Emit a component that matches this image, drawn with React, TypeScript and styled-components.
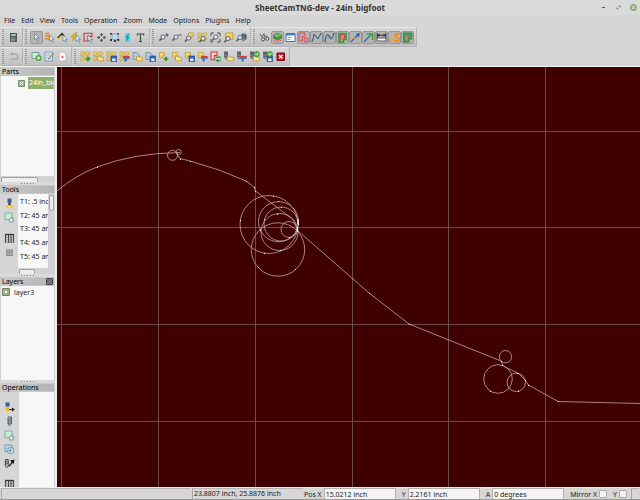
import React from "react";
import styled, { createGlobalStyle } from "styled-components";

const GlobalStyle = createGlobalStyle`
  * { box-sizing: border-box; }
  html, body { margin: 0; height: 100%; }
  #root { height: 100%; }
  body, button, input {
    font-family: "Noto Sans", "Open Sans", sans-serif;
    font-size: 7px;
    color: #222;
  }
`;

/* ---------- layout ---------- */

const Window = styled.div`
  display: flex;
  flex-direction: column;
  height: 100vh;
  overflow: hidden;
  background: #d6d6d6;
`;

const TitleBar = styled.header`
  display: grid;
  grid-template-columns: 1fr auto 1fr;
  align-items: center;
  flex: none;
  height: 15px;
  background: #dadada;
`;

const Title = styled.h1`
  grid-column: 2;
  margin: 0;
  font-size: 8px;
  line-height: 15px;
  font-weight: 700;
  color: #333;
`;

const WindowButtons = styled.div`
  display: flex;
  justify-content: flex-end;
  gap: 8px;
  padding-right: 3px;
`;

const WindowButton = styled.button`
  width: 7px;
  height: 7px;
  padding: 0;
  border: 0;
  background: none;
  display: flex;
`;

const MenuBar = styled.nav`
  display: flex;
  flex: none;
  gap: 6px;
  height: 12px;
  padding-left: 4px;
`;

const MenuItem = styled.button`
  padding: 0;
  border: 0;
  background: none;
  line-height: 12px;
`;

const ToolbarRow = styled.div<{ $height: number }>`
  display: flex;
  flex: none;
  height: ${(p) => p.$height}px;
`;

const ToolGroup = styled.div`
  display: flex;
  align-items: center;
  height: 100%;
  padding: 0 2px 0 6px;
  border: 1px solid;
  border-color: #e6e6e6 #b4b4b4 #b4b4b4 #d4d4d4;
  background:
    repeating-linear-gradient(#999 0 1px, transparent 1px 2px) 1px 1px / 2px 15px no-repeat,
    linear-gradient(#d8d8d8, #c1c1c1);
`;

const ToolButton = styled.button<{ $on?: boolean }>`
  display: flex;
  align-items: center;
  justify-content: center;
  width: 13px;
  height: 13px;
  padding: 0;
  border: 1px solid ${(p) => (p.$on ? "#979797" : "transparent")};
  border-radius: 2px;
  background: ${(p) => (p.$on ? "#b4b4b4" : "none")};
`;

const Main = styled.div`
  display: flex;
  flex: 1;
  min-height: 0;
  border-top: 1px solid #f2f2f2;
`;

const Sidebar = styled.aside`
  display: flex;
  flex-direction: column;
  flex: none;
  width: 57px;
  border-right: 2px solid #eee;
  background: #d0d0d0;
`;

const Panel = styled.section<{ $height?: number }>`
  display: flex;
  flex-direction: column;
  min-height: 0;
  flex: ${(p) => (p.$height ? `0 0 ${p.$height}px` : "1")};
`;

const PanelHeader = styled.h2`
  display: flex;
  flex: none;
  align-items: center;
  justify-content: space-between;
  height: 9px;
  margin: 0;
  padding: 0 1px;
  border: 1px solid #c8c8c8;
  background: linear-gradient(90deg, #c9c9c9, #b4b4b4);
  font-size: 7px;
  line-height: 7px;
  font-weight: 400;
  color: #000;
`;

const Splitter = styled.div`
  flex: none;
  height: 3px;
  background: radial-gradient(circle, #858585 0 0.5px, transparent 1px) center / 3px 3px
    repeat-x #dadada;
  border: 0 solid #dadada;
  border-width: 0 21px;
`;

const PanelBody = styled.div`
  display: flex;
  flex: 1;
  min-height: 0;
`;

const List = styled.ul`
  flex: 1;
  min-width: 0;
  min-height: 0;
  margin: 0 1px;
  padding: 0;
  overflow: hidden;
  list-style: none;
  background: #f7f7f7;
`;

const ToolList = styled(List)`
  display: flex;
  flex-direction: column;
  margin: 0;
  padding: 1px 0 5px;
`;

const ToolRow = styled.li`
  display: flex;
  flex: 1;
  align-items: center;
  padding-left: 2px;
  white-space: nowrap;
  overflow: hidden;
`;

const PartRow = styled.li`
  display: flex;
  align-items: center;
  gap: 3px;
  padding: 1px 0 0 17px;
  white-space: nowrap;
`;

const PartName = styled.span`
  flex: none;
  width: 60px;
  padding: 0 1px;
  line-height: 12px;
  background: #8fae6c;
  color: #fff;
`;

const LayerRow = styled.li`
  display: flex;
  align-items: center;
  height: 12px;
  padding-left: 1px;
`;

const LayerLabel = styled.label`
  display: flex;
  align-items: center;
  gap: 4px;
`;

const LayerBox = styled.input`
  appearance: none;
  width: 8px;
  height: 8px;
  margin: 0;
  border: 3px solid #9db287;
  border-radius: 1px;
  outline: 1px solid #6f8060;
  outline-offset: -1px;
  background: #fff;
`;

const HScroll = styled.div<{ $thumb: number }>`
  flex: none;
  height: 6px;
  padding: 1px;
  background: #d2d2d2;
  &::before {
    content: "";
    display: block;
    width: ${(p) => p.$thumb}px;
    height: 5px;
    border: 1px solid #a0a0a0;
    border-radius: 1px;
    background: #ededed;
  }
`;

const VScroll = styled.div`
  flex: none;
  width: 7px;
  padding: 1px;
  background: #d2d2d2;
  &::before {
    content: "";
    display: block;
    height: 14px;
    border: 1px solid #a0a0a0;
    border-radius: 2px;
    background: #ededed;
  }
`;

const ListColumn = styled.div`
  display: flex;
  flex: 1;
  flex-direction: column;
  min-width: 0;
`;

const IconColumn = styled.div<{ $top: number }>`
  display: flex;
  flex: none;
  flex-direction: column;
  align-items: center;
  gap: 1px;
  width: 18px;
  padding-top: ${(p) => p.$top}px;
  overflow: hidden;
  background: #d6d6d6;
`;

const Gap = styled.div`
  flex: none;
  height: 6px;
`;

const SideButton = styled(ToolButton)`
  flex: none;
`;

const Canvas = styled.main`
  flex: 1;
  min-width: 0;
  overflow: hidden;
  background: #3e0000;
`;

const Plot = styled.svg`
  display: block;
  width: 100%;
  height: 100%;
`;

const StatusBar = styled.footer`
  display: flex;
  flex: none;
  align-items: flex-end;
  height: 13px;
  border-top: 1px solid #eee;
  border-bottom: 1px solid #999;
  background: #d6d6d6;
`;

const StatusCell = styled.div<{ $width?: number }>`
  flex: ${(p) => (p.$width ? `0 0 ${p.$width}px` : "1")};
  align-self: stretch;
  margin: 0 1px;
  padding-left: 1px;
  border-left: 1px solid #a5a5a5;
  border-top: 1px solid #b5b5b5;
  line-height: 9px;
  white-space: nowrap;
`;

const StatusFields = styled.div`
  display: flex;
  flex: none;
  align-items: flex-end;
  gap: 6px;
  padding-right: 3px;
`;

const Field = styled.label`
  display: flex;
  align-items: flex-end;
  gap: 2px;
  height: 11px;
  line-height: 9px;
  white-space: nowrap;
`;

const FieldInput = styled.input`
  width: 72px;
  height: 11px;
  padding: 1px 1px 0;
  border: 1px solid #b0b0b0;
  border-bottom: 0;
  border-radius: 1px 1px 0 0;
  background: #f4f4f4;
  line-height: 9px;
`;

const Check = styled.input`
  appearance: none;
  width: 8px;
  height: 8px;
  margin: 0 0 1px;
  border: 1px solid #aaa;
  border-radius: 1px;
  background: #f4f4f4;
`;

/* ---------- icons ---------- */

const Glyph = styled.svg`
  display: block;
  flex: none;
`;

const Icon = ({ children }: { children: React.ReactNode }) => (
  <Glyph width="11" height="11" viewBox="0 0 11 11" aria-hidden="true">
    {children}
  </Glyph>
);

const Cursor = ({ x = 5, y = 3 }: { x?: number; y?: number }) => (
  <path
    transform={`translate(${x} ${y})`}
    d="M0 0v6l1.5-1.2L2.6 7.4l1.2-.6-1.1-2.4h1.8z"
    fill="#eef4fa"
    stroke="#5b7690"
    strokeWidth=".7"
  />
);

const Lens = ({ x = 4, y = 4 }: { x?: number; y?: number }) => (
  <g transform={`translate(${x} ${y})`} fill="#dbe6ee" stroke="#53606c">
    <path d="M-1.4 1.4L-3.6 3.6" strokeWidth="1.5" />
    <circle r="2.1" strokeWidth=".9" />
  </g>
);

const Part = ({ x = 1, y = 1 }: { x?: number; y?: number }) => (
  <path
    transform={`translate(${x} ${y})`}
    d="M.4 .4h5v3.4h-2v2h-3z"
    fill="#f4d668"
    stroke="#b8922c"
    strokeWidth=".7"
  />
);

const Parts = () => (
  <g fill="#f4d668" stroke="#b8922c" strokeWidth=".6">
    <path d="M1 1h3.4v2.4H3V4.8H1zM6 1h3.6v2.4H8V4.8H6zM1 6h3.4v2H3V9.6H1zM6 6h3.6v2H8V9.6H6z" />
  </g>
);

const Drill = ({ x = 0, y = 0 }: { x?: number; y?: number }) => (
  <g transform={`translate(${x} ${y})`}>
    <path d="M1 .5h4v3.2H1z" fill="#5b6670" />
    <path d="M1.7 3.7h2.6v3L3 8.2 1.7 6.8z" fill="#96a2ac" stroke="#3d464e" strokeWidth=".6" />
    <path d="M1.7 5.8l2.6-1" stroke="#333" strokeWidth=".7" />
  </g>
);

const Plus = ({ x = 8, y = 8 }: { x?: number; y?: number }) => (
  <path d={`M${x - 2.3} ${y}h4.6M${x} ${y - 2.3}v4.6`} stroke="#269a22" strokeWidth="1.7" />
);

const Folder = () => (
  <path d="M4.5 5.3h2l.8 1h3.2v3.5h-6z" fill="#fae68c" stroke="#bd8d20" strokeWidth=".7" />
);

const Disk = () => (
  <g>
    <path d="M5 5h5.5v5.6H5z" fill="#2f66b8" stroke="#174386" strokeWidth=".6" />
    <path d="M6.2 7.5h3.2v2.6H6.2z" fill="#eef4ff" />
  </g>
);

const SwapMark = () => (
  <g>
    <path d="M4 5.5h6.7" stroke="#d63b2a" strokeWidth="1.2" />
    <path d="M4 7h6.7" stroke="#2566be" strokeWidth="1.6" />
    <path d="M5.6 7.8h2v2.6h-2z" fill="#2566be" />
  </g>
);

const Sheet = () => (
  <path d="M1 1.5h4l2 2v5H1z" fill="#b3cbe0" stroke="#6d8aa4" strokeWidth=".8" />
);

const Tick = () => (
  <g>
    <circle cx="7.8" cy="3.1" r="2.7" fill="#56b848" stroke="#257723" strokeWidth=".5" />
    <path d="M6.5 3l1 1.1 1.7-2" fill="none" stroke="#fff" strokeWidth=".9" />
  </g>
);

const RedOutline = () => (
  <path d="M1 1h6v3.5H4.3V8.8H1z" fill="#f2d4d4" stroke="#d23540" strokeWidth="1.1" />
);

const icons: Record<string, React.ReactNode> = {
  machine: (
    <>
      <path d="M2 1h7v9H2z" fill="#49535b" />
      <path d="M3 2h5v2H3z" fill="#9fc3a4" />
      <path d="M3 5.8h3.7M3 7.3h3.7M3 8.8h3.7" stroke="#b3bdc6" strokeWidth=".8" />
      <path d="M7.2 5.2h1v4h-1z" fill="#bd5551" />
    </>
  ),
  select: <Cursor x={3.5} y={1.5} />,
  contour: (
    <>
      <path d="M5.4 1.5H2.2v2.8h3V7H1" fill="none" stroke="#e98b21" strokeWidth="1.5" />
      <Cursor x={5.5} />
    </>
  ),
  start: (
    <>
      <path d="M.8 6L5 1.8l2 2" fill="none" stroke="#333" strokeWidth="1.7" />
      <path d="M1.5 7l3.2-3.2" stroke="#e5cb27" strokeWidth="1.5" />
      <Cursor x={6} y={3} />
    </>
  ),
  selectPart: (
    <>
      <path d="M5 .7L1 5h3L2.5 8.7 7.5 4H4.7L7 .7z" fill="#f1c634" stroke="#9b7715" strokeWidth=".5" />
      <Cursor x={6} y={3} />
    </>
  ),
  nest: (
    <>
      <path d="M1 1.2h8v3.2H5V9H1z" fill="none" stroke="#d23540" strokeWidth="1.1" />
      <Cursor x={5} y={3} />
    </>
  ),
  move: (
    <>
      <path d="M5.5 1.5v8M1.5 5.5h8" stroke="#555" strokeWidth="1" />
      <path d="M5.5 1L7.2 3.3H3.8zM5.5 10L7.2 7.7H3.8zM1 5.5l2.3-1.7v3.4zM10 5.5L7.7 3.8v3.4z" fill="#444" />
      <path d="M4.5 4.5h2v2h-2z" fill="#eee" />
    </>
  ),
  resize: (
    <>
      <path d="M3 2h6v5.5H3z" fill="#c4d8ea" stroke="#7b8fa2" strokeWidth=".7" />
      <path d="M1 1h2v1.6H1zM8.5 1h1.5v1.6H8.500zM1 7h2v2H1zM5 8h2v2H5zM8.3 7h2v2h-2z" fill="#273440" />
    </>
  ),
  measure: (
    <>
      <path d="M3 1h5v9H3z" fill="#32e3ee" />
      <path d="M6.5 2.500L4.500 5.2h2L4.4 8.500" fill="none" stroke="#256080" strokeWidth=".9" />
    </>
  ),
  text: <path d="M2 2h7M5.500 2v7.500M4 9.500h3M2.300 1.500v2M8.700 1.500v2" stroke="#444" strokeWidth="1.1" />,
  zoomIn: (
    <>
      <Lens x={5} y={5} />
      <path d="M7.4 3h3.2M9 1.4v3.2" stroke="#444" strokeWidth=".9" />
    </>
  ),
  zoomOut: (
    <>
      <Lens x={5} y={5} />
      <path d="M7.4 3h3.2" stroke="#444" strokeWidth=".9" />
    </>
  ),
  zoomPart: (
    <>
      <Part x={4} y={0.5} />
      <Lens x={4.5} y={6} />
    </>
  ),
  zoomParts: (
    <>
      <Parts />
      <Lens x={6} y={6.5} />
    </>
  ),
  zoomBox: (
    <>
      <path d="M1 4V1h3M7 1h3v3M10 7v3H7M1 7v3h2" fill="none" stroke="#444" strokeWidth=".9" />
      <Lens x={5.8} y={5} />
    </>
  ),
  zoomSheet: (
    <>
      <path d="M2.500 1H10v6.4H2.500z" fill="#ffd34f" stroke="#a88b35" strokeWidth=".7" />
      <Lens x={5} y={6.5} />
    </>
  ),
  zoomTool: (
    <>
      <Drill x={4.5} y={1} />
      <Lens x={4} y={5.5} />
      <path d="M9 2.5h1.5v5H9z" fill="#455666" />
    </>
  ),
  hatch: (
    <>
      <path d="M1 2l2 3 2-3 1 5M5 5l2-1 2 2" fill="none" stroke="#737a80" strokeWidth="1.2" />
      <circle cx="4" cy="7.5" r="1.5" fill="#eee" stroke="#444" />
      <circle cx="8.3" cy="6.8" r="1.5" fill="#eee" stroke="#444" />
    </>
  ),
  solid: (
    <>
      <path d="M1 4l4.5-3L10 4v4l-4.5 2.5L1 8z" fill="#d94a4a" />
      <path d="M1 3.6L5.5 1 10 3.6 5.5 6.2z" fill="#66c25a" stroke="#277b32" strokeWidth=".6" />
      <path d="M5.5 6.2L10 3.6v2.4L5.500 8.600 1 6V3.600z" fill="#438c55" />
      <path d="M1 6.8l4.5 2.7L10 6.8" fill="none" stroke="#f1e2e2" strokeWidth=".8" />
    </>
  ),
  panel: (
    <>
      <path d="M1 1.5h9v8H1z" fill="#fff" stroke="#3975b5" />
      <path d="M1 1.5h9v2H1z" fill="#3f80c8" />
      <path d="M2.5 5.5h4.3M2.5 7.5h3" stroke="#6b90b9" strokeWidth=".8" />
    </>
  ),
  outlines: (
    <>
      <path d="M1 1h6v3.500H4.300V8.800H1z" fill="none" stroke="#d84a52" />
      <path d="M6.2 6.2H10V9.6H6.2z" fill="none" stroke="#d84a52" />
    </>
  ),
  segments: (
    <>
      <path d="M1.2 9.3L3.2 2.5l3.6 4 2.9-4.6" fill="none" stroke="#315b92" strokeWidth="1" />
      <path d="M2.5 1.900h1.3v1.3H2.500zM6.100 5.800h1.300v1.300H6.100zM.6 8.500h1.300v1.300H.6zM9 1.300h1.300v1.300H9z" fill="#40566c" />
    </>
  ),
  curves: (
    <>
      <path d="M1.2 9.3C2 1 4 2 5.500 5S8.600 7 9.600 1.500" fill="none" stroke="#315b92" strokeWidth="1.1" />
      <path d="M.6 8.500h1.300v1.300H.6zM5 4.400h1.300v1.300H5zM9 1h1.300v1.300H9z" fill="#40566c" />
    </>
  ),
  path: (
    <>
      <path d="M2 1.500h7v6H6.500V10H2z" fill="none" stroke="#2d9c37" strokeWidth="1.600" />
      <path d="M3.600 8.500V3h4v3H5.500" fill="none" stroke="#d33c38" strokeWidth="1.1" />
    </>
  ),
  rapids: (
    <>
      <path d="M1 9.700L8.600 2.300" stroke="#315fae" strokeWidth="1.2" />
      <path d="M9.800 1L9 5.200 5.800 2z" fill="#315fae" />
      <path d="M3.300 5.700l2 2" stroke="#e89422" strokeWidth="1.700" />
    </>
  ),
  direction: (
    <>
      <path d="M1 9.700L8.200 2.600" stroke="#28669b" strokeWidth="1.2" />
      <path d="M3.500 2h6v6" fill="none" stroke="#36a832" strokeWidth="1.600" />
    </>
  ),
  widths: (
    <>
      <path d="M1.300 1v5M9.700 1v5M1.500 3.200h8" stroke="#333" strokeWidth="1.1" />
      <path d="M1 6h9v3H1z" fill="#f1f1f1" stroke="#444" strokeWidth=".8" />
      <path d="M3.500 1.500v3.400L1.600 3.200zM7.500 1.500v3.400l1.900-1.700z" fill="#333" />
    </>
  ),
  starts: (
    <>
      <path d="M.3 7.500h3.800M2.200 5.600v3.800" stroke="#ff9d00" strokeWidth="1.300" />
      <path d="M10 2.400C8.500 1.300 6 1.600 6 3.400S10 5.200 10 7.200 7 9.500 5.500 8.300" fill="none" stroke="#ff8c0a" strokeWidth="1.800" />
    </>
  ),
  endPath: (
    <>
      <path d="M2 1.500h7.500v5.200H6.500V9.700H2z" fill="none" stroke="#259639" strokeWidth="1.800" />
      <path d="M4 9V3.500h4v1.700H5.200" fill="none" stroke="#d23c38" />
    </>
  ),
  undo: (
    <>
      <path d="M4 3h3.3a2.6 2.6 0 010 5.2H3" fill="none" stroke="#aaa" strokeWidth="1.5" />
      <path d="M4.5 .8v4.3L1.8 3z" fill="#aaa" />
    </>
  ),
  newPart: (
    <>
      <path d="M1 1.5h7v6H1z" fill="#cfe9dc" stroke="#608a88" strokeWidth=".8" />
      <circle cx="7.500" cy="7" r="3" fill="#42ad35" />
      <path d="M5.9 7h3.2M7.5 5.4v3.2" stroke="#fff" strokeWidth="1.2" />
    </>
  ),
  edit: (
    <>
      <path d="M1 1h7.5v9H1z" fill="#dceaf6" stroke="#6c8fae" strokeWidth=".8" />
      <path d="M2.3 3.2h4M2.3 5h3M2.3 7h2" stroke="#77a1c7" strokeWidth=".7" />
      <path d="M5 7.6L9.8 2" stroke="#b98a4a" strokeWidth="1.4" />
      <path d="M4.3 8.5l.4-1.5 1 .8z" fill="#333" />
    </>
  ),
  blank: (
    <>
      <path d="M2 1h4.7L9 3.3V10H2z" fill="#fbf7f7" stroke="#b9a4a4" strokeWidth=".7" />
      <circle cx="5.5" cy="6" r="1" fill="#df3737" />
    </>
  ),
  partsAdd: (<><Parts /><Plus /></>),
  partsOpen: (<><Parts /><Folder /></>),
  partsSave: (<><Parts /><Disk /></>),
  partsSwap: (<><Parts /><SwapMark /></>),
  sheetOpen: (<><Sheet /><Folder /></>),
  sheetSave: (<><Sheet /><Disk /></>),
  partAdd: (<><Part /><Plus /></>),
  partOpen: (<><Part /><Folder /></>),
  partSave: (<><Part /><Disk /></>),
  partSwap: (<><Part /><SwapMark /></>),
  redAdd: (
    <>
      <RedOutline />
      <path d="M5.7 5.5h4.8v5H5.7z" fill="#299338" />
      <path d="M6.6 9V7.5h2.6M9.3 7v2.5" stroke="#fff" strokeWidth=".8" fill="none" />
    </>
  ),
  toolOpen: (<><Drill /><Folder /></>),
  toolSwap: (<><Drill /><SwapMark /></>),
  toolCheckOpen: (<><Drill /><Folder /><Tick /></>),
  toolCheckSave: (<><Drill /><Disk /><Tick /></>),
  stop: (
    <>
      <path d="M2 2h7.500v7.500H2z" fill="#c71620" stroke="#760a10" />
      <path d="M4 4l3.500 3.500M7.500 4L4 7.500" stroke="#fff" strokeWidth="1.300" />
    </>
  ),
  torch: (
    <>
      <path d="M3.5 .5h4v4.3h-4z" fill="#405c8c" />
      <path d="M4.300 4.800h2.400v2.700H4.300z" fill="#3a3f46" />
      <path d="M1.500 7.500h8L8 10.200H3z" fill="#efc12e" />
      <path d="M4.4 8h2.2v1.5H4.4z" fill="#fff0a0" />
    </>
  ),
  layerTool: (
    <>
      <path d="M1 1h7v6.7H1z" fill="#c5f0d0" stroke="#719cbd" strokeWidth=".8" />
      <path d="M7.3 5.2l.6 1.2 1.6-.2-.6 1.3 1.3 1-1.6.4-.2 1.5-1.4-.9-1.4.7.1-1.5-1-1.1 1.5-.4z" fill="#e8f0f4" stroke="#587284" strokeWidth=".6" />
    </>
  ),
  layerCopy: (
    <>
      <path d="M1 1h7v6.5H1z" fill="#b5d9ec" stroke="#5d88a8" strokeWidth=".8" />
      <path d="M4 4h5.5v5.2H4z" fill="#d6ebf5" stroke="#4e7c9a" strokeWidth=".7" />
      <path d="M6.4 5.2v2.7M5.1 6.7h2.7" stroke="#30709a" strokeWidth=".8" />
    </>
  ),
  table: (
    <>
      <path d="M1.500 1v9M4.500 1v9M7 1v9M9.500 1v9" stroke="#3b3b3b" strokeWidth="1.1" />
      <path d="M1 1.500h9" stroke="#3b3b3b" strokeWidth="1.3" />
      <path d="M1 4.500h9M1 7h9M1 9.500h9" stroke="#777" strokeWidth=".6" />
    </>
  ),
  tableOff: (
    <>
      <path d="M2 2h7v7H2z" fill="#b0b0b0" />
      <path d="M2 8.5h7M3 2v6M5.5 2v6M8 2v6M2 5h7" stroke="#919191" strokeWidth="1" />
    </>
  ),
  jet: (
    <>
      <path d="M1.5 .5h4v4h-4z" fill="#365d95" />
      <path d="M2 5h3v4H2z" fill="#edbf27" />
      <path d="M5 7.5h4" stroke="#222" strokeWidth="1.1" />
      <path d="M8 5.5l3 2-3 2z" fill="#222" />
    </>
  ),
  bit: (
    <>
      <path d="M4 1h3.500v7L5.700 9.800 4 8z" fill="#b9c2ca" stroke="#4c565e" strokeWidth=".9" />
      <path d="M4 4l3.500-1.500M4 6l3.500-1.500M4 8l3.500-1.500" stroke="#3f484f" strokeWidth=".8" />
    </>
  ),
  bitArrow: (
    <>
      <path d="M1.300 1.500h3V8L2.800 9.800 1.300 8z" fill="#b9c2ca" stroke="#444" strokeWidth=".9" />
      <path d="M1.300 4.200l3-1.400M1.300 6.400l3-1.400" stroke="#333" strokeWidth=".8" />
      <path d="M5 8.300L9 3.300" stroke="#111" strokeWidth="1.300" />
      <path d="M10.500 1.500L9.600 6 6 2.500z" fill="#111" />
    </>
  ),
};

/* ---------- data ---------- */

const menus = ["File", "Edit", "View", "Tools", "Operation", "Zoom", "Mode", "Options", "Plugins", "Help"];

type Group = { items: string[]; on?: string[] };

const topGroups: Group[] = [
  { items: ["machine"] },
  {
    items: ["select", "contour", "start", "selectPart", "nest", "move", "resize", "measure", "text"],
    on: ["select"],
  },
  { items: ["zoomIn", "zoomOut", "zoomPart", "zoomParts", "zoomBox", "zoomSheet", "zoomTool"] },
  {
    items: [
      "hatch", "solid", "panel", "outlines", "segments", "curves",
      "path", "rapids", "direction", "widths", "starts", "endPath",
    ],
    on: ["solid", "outlines", "segments", "curves", "path", "rapids", "direction", "widths", "starts", "endPath"],
  },
];

const bottomGroups: Group[] = [
  { items: ["undo"] },
  { items: ["newPart", "edit", "blank"] },
  {
    items: [
      "partsAdd", "partsOpen", "partsSave", "partsSwap", "sheetOpen", "sheetSave",
      "partAdd", "partOpen", "partSave", "partSwap", "redAdd", "toolOpen",
      "toolSwap", "toolCheckOpen", "toolCheckSave", "stop",
    ],
  },
];

const toolNames = ["T1: .5 inch", "T2: 45 amp", "T3: 45 amp", "T4: 45 amp", "T5: 45 amp"];

const circles = [
  [269, 224.5, 29], [278.5, 221.7, 20], [281, 224, 17], [279.5, 232, 18.5],
  [289, 229.5, 8], [278, 249.5, 26.7], [172.5, 155.3, 5], [178.7, 152, 2.6],
  [505.5, 356.7, 6.2], [498, 379, 14.3], [516.3, 382.3, 9.2],
];

const nodes = [
  [97, 167], [190, 161], [180, 159], [246, 181], [254, 187], [255, 191],
  [273, 196], [240, 220], [264, 253], [258, 267], [295, 269], [280, 250],
  [298, 224], [297, 230], [369, 293], [409, 324], [501, 361], [502, 365],
  [525, 380], [528, 385], [490, 391], [518, 391], [517, 373], [558, 401],
  [277, 214], [264, 219], [281, 207], [289, 237], [260, 230], [278, 201],
];

const gridX = [61, 158, 255, 352, 448, 545];
const gridY = [131, 227, 324, 421];

/* ---------- components ---------- */

const Groups = ({ groups, height }: { groups: Group[]; height: number }) => (
  <ToolbarRow $height={height}>
    {groups.map((g) => (
      <ToolGroup key={g.items[0]} role="toolbar">
        {g.items.map((name) => (
          <ToolButton key={name} aria-label={name} $on={g.on?.includes(name)}>
            <Icon>{icons[name]}</Icon>
          </ToolButton>
        ))}
      </ToolGroup>
    ))}
  </ToolbarRow>
);

const Side = ({ name }: { name: string }) => (
  <SideButton aria-label={name}>
    <Icon>{icons[name]}</Icon>
  </SideButton>
);

const Drawing = () => (
  <Plot role="img" aria-label="Toolpath view">
    <g transform="translate(-57 -67)">
      <g stroke="#6b4a4a">
        {gridX.map((x) => (
          <path key={x} d={`M${x + 0.5} 0V3000`} />
        ))}
        {gridY.map((y) => (
          <path key={y} d={`M0 ${y + 0.5}H4000`} />
        ))}
      </g>
      <g fill="none" stroke="#c2a6a6" strokeWidth=".8">
        <path d="M57 191Q76 175 97 167Q134 153 180 152.5" />
        <path d="M177 154L180 158.5L190 161Q220 169 246 181L254 187L255.5 191L293 219.5L298 231L369 293L409 324L501 361L503 365.5L506 367.5L518 373L525 380L528.5 385L558 401.5L640 403.5" />
        {circles.map(([cx, cy, r]) => (
          <circle key={`${cx}-${cy}`} cx={cx} cy={cy} r={r} />
        ))}
      </g>
      <path d="M298 219v5M297.5 227v5" stroke="#fff" strokeWidth="1.2" />
      <g fill="#fff">
        {nodes.map(([x, y]) => (
          <rect key={`${x}-${y}`} x={x} y={y} width="1" height="1" />
        ))}
      </g>
    </g>
  </Plot>
);

export default function App() {
  return (
    <Window>
      <GlobalStyle />
      <TitleBar>
        <Title>SheetCamTNG-dev - 24in_bigfoot</Title>
        <WindowButtons>
          <WindowButton aria-label="Minimize">
            <Glyph width="7" height="7" viewBox="0 0 7 7">
              <path d="M2 3.5h3" stroke="#555" />
            </Glyph>
          </WindowButton>
          <WindowButton aria-label="Maximize">
            <Glyph width="7" height="7" viewBox="0 0 7 7">
              <path d="M3.5 2h1.7v1.7M3.5 5H2V3.5" fill="none" stroke="#666" strokeWidth=".8" />
            </Glyph>
          </WindowButton>
          <WindowButton aria-label="Close">
            <Glyph width="7" height="7" viewBox="0 0 7 7">
              <circle cx="3.5" cy="3.5" r="3.5" fill="#8fae6c" />
              <path d="M2.2 2.2l2.6 2.6M4.8 2.2L2.2 4.8" stroke="#fff" />
            </Glyph>
          </WindowButton>
        </WindowButtons>
      </TitleBar>
      <MenuBar>
        {menus.map((m) => (
          <MenuItem key={m}>{m}</MenuItem>
        ))}
      </MenuBar>
      <Groups groups={topGroups} height={20} />
      <Groups groups={bottomGroups} height={19} />
      <Main>
        <Sidebar>
          <Panel $height={115}>
            <PanelHeader>Parts</PanelHeader>
            <List>
              <PartRow>
                <Glyph width="7" height="7" viewBox="0 0 7 7">
                  <path d="M.5 .5h6v6h-6z" fill="#a9b996" stroke="#78906a" />
                  <path d="M2 2l3 3M5 2L2 5" stroke="#fff" />
                </Glyph>
                <PartName>24in_bigfoot</PartName>
              </PartRow>
            </List>
            <HScroll $thumb={35} />
          </Panel>
          <Splitter />
          <Panel $height={89}>
            <PanelHeader>Tools</PanelHeader>
            <PanelBody>
              <IconColumn $top={3}>
                <Side name="torch" />
                <Side name="layerTool" />
                <Gap />
                <Side name="table" />
                <Side name="tableOff" />
              </IconColumn>
              <ListColumn>
                <PanelBody>
                  <ToolList>
                    {toolNames.map((t) => (
                      <ToolRow key={t}>{t}</ToolRow>
                    ))}
                  </ToolList>
                  <VScroll />
                </PanelBody>
                <HScroll $thumb={14} />
              </ListColumn>
            </PanelBody>
          </Panel>
          <Splitter />
          <Panel $height={103}>
            <PanelHeader>
              Layers
              <Glyph width="7" height="7" viewBox="0 0 7 7">
                <path d="M.5 .5h6v6h-6z" fill="#999" stroke="#444" />
                <circle cx="3.5" cy="3.5" r="2.2" fill="#444" />
                <path d="M2.5 2.5l2 2M4.5 2.5l-2 2" stroke="#eee" strokeWidth=".8" />
              </Glyph>
            </PanelHeader>
            <List>
              <LayerRow>
                <LayerLabel>
                  <LayerBox type="checkbox" defaultChecked />
                  layer3
                </LayerLabel>
              </LayerRow>
            </List>
          </Panel>
          <Splitter />
          <Panel>
            <PanelHeader>Operations</PanelHeader>
            <PanelBody>
              <IconColumn $top={9}>
                <Side name="jet" />
                <Side name="bit" />
                <Side name="layerTool" />
                <Side name="layerCopy" />
                <Side name="bitArrow" />
                <Gap />
                <Side name="table" />
              </IconColumn>
              <List />
            </PanelBody>
          </Panel>
        </Sidebar>
        <Canvas>
          <Drawing />
        </Canvas>
      </Main>
      <StatusBar>
        <StatusCell />
        <StatusCell $width={111}>23.8807 inch, 25.8876 inch</StatusCell>
        <StatusFields>
          <Field>
            Pos X
            <FieldInput defaultValue="15.0212 inch" />
          </Field>
          <Field>
            Y
            <FieldInput defaultValue="2.2161 inch" />
          </Field>
          <Field>
            A
            <FieldInput defaultValue="0 degrees" />
          </Field>
          <Field>
            Mirror X
            <Check type="checkbox" />
          </Field>
          <Field>
            Y
            <Check type="checkbox" />
          </Field>
        </StatusFields>
        <StatusCell $width={8} />
      </StatusBar>
    </Window>
  );
}
